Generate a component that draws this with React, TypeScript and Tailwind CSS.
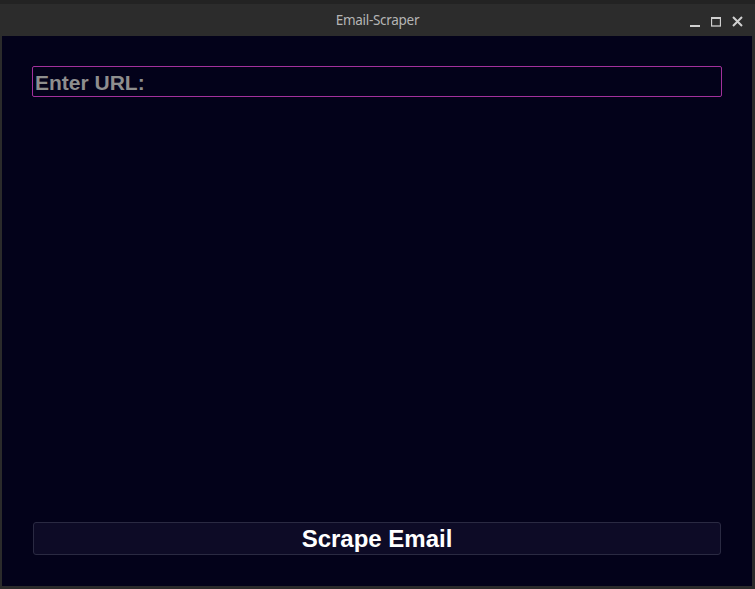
import { useState } from 'react';

export default function App() {
  const [url, setUrl] = useState('');

  return (
    <div className="w-[755px] h-[589px] bg-[#2b2b2b] flex flex-col overflow-hidden">
      {/* Title bar */}
      <div className="relative h-[36px] shrink-0 bg-[#2c2c2c] border-t-[4px] border-[#232323] flex items-center justify-center">
        <span className="text-[13.5px] text-[#b5b5b5] font-['Noto_Sans',sans-serif] tracking-[-0.3px]">
          Email-Scraper
        </span>
        <div className="absolute right-[12px] top-[12px] flex items-center gap-[11px] text-[#d0d0d0]">
          <svg width="10" height="10" viewBox="0 0 10 10">
            <rect x="0" y="8" width="10" height="2" fill="currentColor" />
          </svg>
          <svg width="10" height="10" viewBox="0 0 10 10">
            <rect x="0.5" y="0.5" width="9" height="8.5" fill="none" stroke="currentColor" strokeWidth="1.3" />
            <rect x="0" y="0" width="10" height="2" fill="currentColor" />
          </svg>
          <svg width="11" height="11" viewBox="0 0 11 11">
            <path d="M1 1 L10 10 M10 1 L1 10" stroke="currentColor" strokeWidth="2" />
          </svg>
        </div>
      </div>

      {/* Main area */}
      <div className="flex-1 ml-[2px] mr-[3px] mb-[3px] bg-[#03021a] flex flex-col px-[30px] pt-[30px] pb-[31px]">
        <input
          value={url}
          onChange={(e) => setUrl(e.target.value)}
          placeholder="Enter URL:"
          className="h-[31px] w-[690px] rounded-[2px] border border-[#a2309c] bg-[#03021a] px-[2px] pt-[2px] text-[21px] font-bold text-[#d0d0d0] placeholder:text-[#8e8e8e] outline-none font-['Liberation_Sans',Arial,sans-serif]"
        />
        <div className="flex-1" />
        <button className="ml-[1px] h-[33px] w-[688px] rounded-[3px] border border-[#2a2a42] bg-[#0d0b26] text-[24px] font-bold leading-none text-white font-['Liberation_Sans',Arial,sans-serif]">
          Scrape Email
        </button>
      </div>
    </div>
  );
}
